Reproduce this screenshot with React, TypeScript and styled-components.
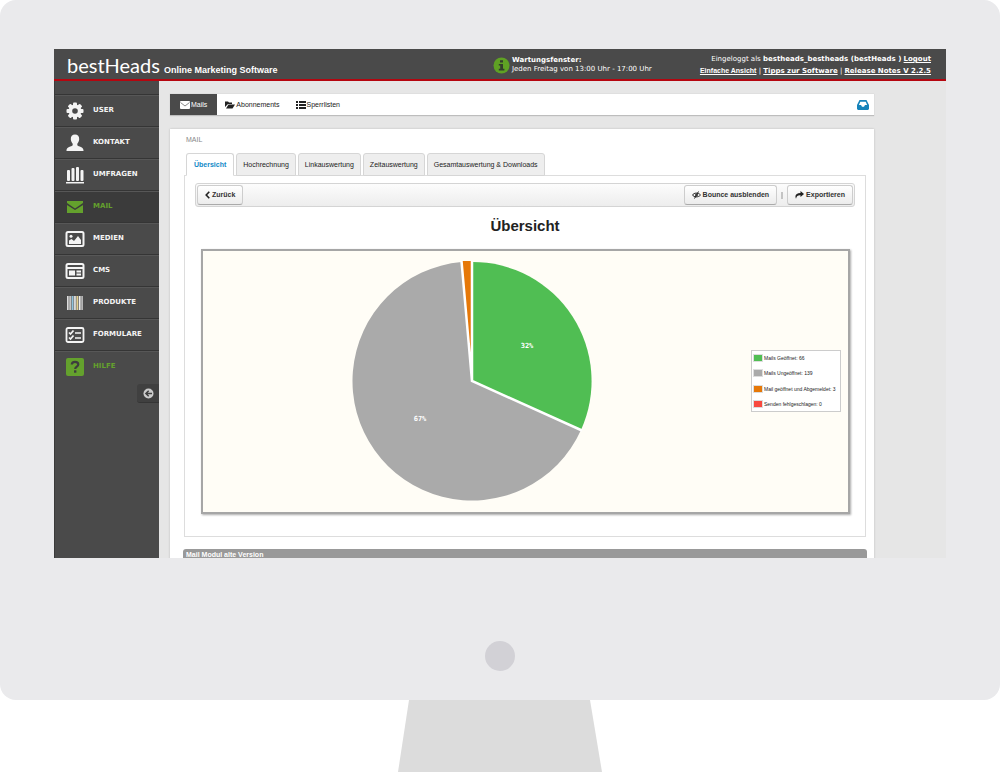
import React from "react";
import styled, { createGlobalStyle, css } from "styled-components";

const sans = `"Liberation Sans", Arial, sans-serif`;
const wide = `"DejaVu Sans", Verdana, sans-serif`;

const GlobalStyle = createGlobalStyle`
  * { box-sizing: border-box; }
  body { margin: 0; background: #fff; font-family: ${sans}; font-size: 7px; line-height: 10px; color: #222; }
  button, a { font: inherit; color: inherit; }
  h1, h2, p, ul { margin: 0; padding: 0; }
`;

const Display = styled.div`
  display: flex;
  flex-direction: column;
  align-items: center;
`;

const Bezel = styled.div`
  width: 100%;
  padding: 49px 54px 29px;
  background: #eaeaec;
  border-radius: 16px;
  display: flex;
  flex-direction: column;
  align-items: center;
  gap: 83px;
`;

const Screen = styled.div`
  width: 100%;
  aspect-ratio: 892 / 509;
  overflow: hidden;
  display: flex;
  flex-direction: column;
  background: #e6e6e6;
`;

const PowerButton = styled.button`
  width: 30px;
  height: 30px;
  border: 0;
  border-radius: 50%;
  background: #d2d1d6;
`;

const Stand = styled.div`
  width: 204px;
  height: 72px;
  background: #dcdcdc;
  clip-path: polygon(11px 0, 192px 0, 100% 100%, 0 100%);
`;

const Header = styled.header`
  display: grid;
  grid-template-columns: 1fr 438px;
  height: 32px;
  flex: none;
  padding: 0 15px 0 13px;
  background: #4a4a4a;
  border-bottom: 2px solid #b5060f;
  color: #fff;
`;

const Brand = styled.div`
  display: flex;
  align-items: baseline;
  gap: 4px;
`;

const HeaderInfo = styled.div`
  display: flex;
  justify-content: space-between;
`;

const Logo = styled.h1`
  font: 400 20px/32px Lato, sans-serif;
`;

const Slogan = styled.p`
  font-size: 9px;
  font-weight: 700;
`;

const Notice = styled.div`
  display: flex;
  align-items: center;
  gap: 2px;
  font: 7px/9px ${wide};
`;

const Account = styled.div`
  padding-top: 4px;
  text-align: right;
  font: 7px/12px ${wide};
  a { font-weight: 700; }
`;

const PlainLink = styled.a`
  font-family: ${sans};
`;

const Body = styled.div`
  flex: 1;
  min-height: 0;
  display: flex;
`;

const Sidebar = styled.nav`
  width: 105px;
  flex: none;
  padding-top: 13px;
  background: #4a4a4a;
  border-left: 1px solid #3a3a3a;
`;

const MenuItem = styled.a<{ $active?: boolean; $green?: boolean }>`
  display: flex;
  align-items: center;
  gap: 8px;
  height: 32px;
  padding: 0 0 2px 10px;
  border-top: 1px solid #353535;
  box-shadow: inset 0 1px #575757;
  background: ${(p) => (p.$active ? "#3b3b3b" : "#4a4a4a")};
  color: ${(p) => (p.$green ? "#64a12d" : "#f4f4f4")};
  font: 700 7px/10px ${wide};
  text-decoration: none;
  svg { flex: none; margin-top: 2px; }
`;

const Collapse = styled.button`
  display: flex;
  align-items: center;
  justify-content: center;
  width: 22px;
  height: 19px;
  margin: 2px 0 0 auto;
  border: 0;
  border-bottom: 1px solid #353535;
  border-radius: 3px 0 0 3px;
  background: #404040;
  padding: 0;
`;

const Main = styled.main`
  flex: 1;
  min-width: 0;
  padding: 13px 72px 0 11px;
`;

const NavBar = styled.nav`
  display: flex;
  align-items: center;
  height: 22px;
  margin-bottom: 13px;
  padding-right: 5px;
  background: #fff;
  border-bottom: 1px solid #bdbdbd;
  box-shadow: 0 0 1px #bbb;
`;

const NavLink = styled.a<{ $active?: boolean }>`
  display: flex;
  align-items: center;
  gap: 1px;
  height: 21px;
  padding: 0 8px;
  text-decoration: none;
  ${(p) => p.$active && css`padding: 0 10px; background: #4a4a4a; color: #fff;`}
`;

const InboxButton = styled.button`
  display: flex;
  margin-left: auto;
  padding: 0;
  border: 0;
  background: none;
`;

const Card = styled.section`
  padding: 6px 7px 0 14px;
  background: #fff;
  box-shadow: 0 0 2px #bbb;
`;

const CardLabel = styled.p`
  padding-left: 2px;
  margin-bottom: 8px;
  color: #888;
`;

const Tabs = styled.div`
  display: flex;
  gap: 2px;
  padding-left: 2px;
`;

const Tab = styled.button<{ $active?: boolean }>`
  height: 23px;
  margin-bottom: -1px;
  padding: 0 6px;
  border: 1px solid #d6d6d6;
  border-radius: 3px 3px 0 0;
  background: #eee;
  ${(p) => p.$active && css`
    padding: 0 7px;
    background: #fff;
    border-bottom-color: #fff;
    color: #1389c7;
    font-weight: 700;
  `}
`;

const Panel = styled.div`
  padding: 7px 10px 22px;
  border: 1px solid #ddd;
  margin-right: 1px;
`;

const Toolbar = styled.div`
  display: flex;
  align-items: center;
  gap: 3px;
  height: 24px;
  padding: 0 1px;
  border: 1px solid #d4d4d4;
  border-radius: 3px;
  background: linear-gradient(#fcfcfc, #ededed);
`;

const Divider = styled.span`
  width: 2px;
  height: 7px;
  background: #c4c4c4;
  margin: 0 1px;
`;

const ToolButton = styled.button<{ $first?: boolean }>`
  display: flex;
  align-items: center;
  gap: 2px;
  height: 20px;
  padding: 0 7px;
  border: 1px solid #cdcdcd;
  border-bottom-color: #aaa;
  border-radius: 3px;
  background: linear-gradient(#fff, #ececec);
  font-weight: 700;
  color: #333;
  ${(p) => p.$first && css`margin-right: auto;`}
`;

const ChartTitle = styled.h2`
  margin: 9px 0 13px;
  text-align: center;
  font-size: 15px;
  line-height: 20px;
`;

const Chart = styled.div`
  display: flex;
  align-items: center;
  gap: 10px;
  margin: 0 5px 0 6px;
  padding: 10px 7px 11px 0;
  border: 2px solid #a6a6a6;
  box-shadow: 1px 1px 2px #aaa;
  background: #fffdf6;
`;

const PieArea = styled.div`
  flex: 1;
  display: flex;
  justify-content: center;
`;

const Legend = styled.ul`
  display: flex;
  flex-direction: column;
  justify-content: space-between;
  width: 90px;
  height: 62px;
  padding: 3px 1px;
  border: 1px solid #ccc;
  background: #fff;
  list-style: none;
  font: 5px/8px ${sans};
  white-space: nowrap;
`;

const LegendItem = styled.li`
  display: flex;
  align-items: center;
  gap: 1px;
`;

const Swatch = styled.span<{ $color: string }>`
  width: 10px;
  height: 8px;
  border: 1px solid #ddd;
  background: ${(p) => p.$color};
`;

const VersionBar = styled.div`
  height: 22px;
  margin: 12px 0 0 -1px;
  padding: 1px 3px;
  border-radius: 3px 3px 0 0;
  background: #999;
  color: #fff;
  font-weight: 700;
`;

const SideIcon = ({ children }: { children: React.ReactNode }) => (
  <svg width="20" height="20" viewBox="0 0 20 20" fill="currentColor" aria-hidden="true">{children}</svg>
);

const icons: Record<string, React.ReactNode> = {
  USER: (
    <>
      {[0, 45, 90, 135].map((a) => (
        <rect key={a} x="8" y="1.5" width="4" height="17" rx="1" transform={`rotate(${a} 10 10)`} />
      ))}
      <circle cx="10" cy="10" r="6.4" />
      <circle cx="10" cy="10" r="2.8" fill="#4a4a4a" />
    </>
  ),
  KONTAKT: (
    <path d="M10 1.500C7.300 1.500 5.600 3.500 5.800 6.300C6 8.700 7 9.800 7.700 10.800V12.300C6.500 13.800 1.500 13.800 1.500 17.500V18H18.500V17.500C18.500 13.800 13.500 13.800 12.300 12.300V10.800C13 9.800 14 8.700 14.200 6.300C14.400 3.500 12.700 1.500 10 1.500Z" />
  ),
  UMFRAGEN: (
    <>
      <rect x="2" y="5" width="3" height="11" rx="1" />
      <rect x="6.500" y="3" width="3" height="13" rx="1" />
      <rect x="11" y="2" width="3" height="14" rx="1" />
      <rect x="15.500" y="5" width="3" height="11" rx="1" />
      <rect x="1" y="17" width="18" height="1.500" />
    </>
  ),
  MAIL: <path d="M2 4H18V6L10 11.500L2 6ZM2 8L10 13L18 8V16H2Z" />,
  MEDIEN: (
    <>
      <rect x="1.500" y="3" width="17" height="14" rx="1.500" fill="none" stroke="currentColor" strokeWidth="2" />
      <path d="M4 15V11.500L6.500 10L9 12L13 7L16 11V15Z" />
      <circle cx="6" cy="7.200" r="1.500" />
    </>
  ),
  CMS: (
    <>
      <rect x="1.500" y="3" width="17" height="14" rx="1.500" fill="none" stroke="currentColor" strokeWidth="2" />
      <rect x="2" y="6" width="16" height="2" />
      <rect x="4" y="9.500" width="6" height="5" />
      <rect x="11.500" y="9.500" width="4.500" height="2" />
      <rect x="11.500" y="12.500" width="4.500" height="2" />
    </>
  ),
  PRODUKTE: (
    <>
      <rect x="2" y="3" width="16" height="14" fill="#777" />
      {["#ddd", "#ccc", "#8fc3dd", "#eee", "#e3cf8e", "#eee", "#bbb"].map((c, i) => (
        <rect key={i} x={2 + i * 2.4} y="3" width="1.500" height="14" fill={c} />
      ))}
    </>
  ),
  FORMULARE: (
    <>
      <rect x="1.500" y="3" width="17" height="14" rx="1.500" fill="none" stroke="currentColor" strokeWidth="1.800" />
      <path d="M4 7.500L5.500 9L8.500 5.500M4 12.500L5.500 14L8.500 10.500M10 8H16M10 13H16" fill="none" stroke="currentColor" strokeWidth="1.700" />
    </>
  ),
  HILFE: (
    <>
      <rect x="1" y="1" width="18" height="18" rx="2" />
      <path d="M6.800 7.600C6.800 5.600 8.100 4.800 10 4.800C12 4.800 13.300 5.800 13.300 7.400C13.300 9.600 10.200 9.500 10.200 12" fill="none" stroke="#3d3d3d" strokeWidth="2.200" />
      <rect x="9" y="13.300" width="2.400" height="2.400" fill="#3d3d3d" />
    </>
  ),
};

const legend = [
  { color: "#50be53", label: "Mails Geöffnet: 66" },
  { color: "#aaaaaa", label: "Mails Ungeöffnet: 139" },
  { color: "#e67808", label: "Mail geöffnet und Abgemeldet: 3" },
  { color: "#f84a40", label: "Senden fehlgeschlagen: 0" },
];

const Pie = () => (
  <svg width="242" height="240" viewBox="-121 -120 242 240" role="img" aria-label="Übersicht">
    <g stroke="#fff" strokeWidth="2.500">
      <path d="M0 0L109 49A119.500 119.500 0 1 1 -10.500 -119Z" fill="#aaaaaa" stroke="none" />
      <path d="M0 0L-10.500 -120A120 120 0 0 1 0 -120Z" fill="#e67808" stroke="none" />
      <path d="M0 0V-119A119 119 0 0 1 109 49Z" fill="#50be53" stroke="none" />
      <path d="M0 -121V0L110 49.500M0 0L-10.600 -121" fill="none" />
    </g>
    <g fill="#fff" fontFamily="DejaVu Sans Mono, monospace" fontWeight="700" fontSize="7" textAnchor="middle">
      <text x="55" y="-33">32%</text>
      <text x="-52" y="40">67%</text>
    </g>
  </svg>
);

export default function App() {
  return (
    <Display>
      <GlobalStyle />
      <Bezel>
        <Screen>
          <Header>
            <Brand>
              <Logo>bestHeads</Logo>
              <Slogan>Online Marketing Software</Slogan>
            </Brand>
            <HeaderInfo>
              <Notice>
                <svg width="17" height="17" viewBox="0 0 17 17" aria-hidden="true">
                  <circle cx="8.500" cy="8.500" r="8" fill="#5fa124" />
                  <path d="M7 3.200h3v2.300H7zM5.800 7H10v4.800h1.400v1.700H5.800v-1.700h1.400V8.600H5.800z" fill="#333d2c" />
                </svg>
                <p>
                  <b>Wartungsfenster:</b>
                  <br />
                  Jeden Freitag von 13:00 Uhr - 17:00 Uhr
                </p>
              </Notice>
              <Account>
                <p>
                  Eingeloggt als <b>bestheads_bestheads (bestHeads )</b> <a href="#logout">Logout</a>
                </p>
                <p>
                  <PlainLink href="#ansicht">Einfache Ansicht</PlainLink> | <a href="#tipps">Tipps zur Software</a> |{" "}
                  <a href="#release">Release Notes V 2.2.5</a>
                </p>
              </Account>
            </HeaderInfo>
          </Header>
          <Body>
            <Sidebar>
              {Object.keys(icons).map((name) => (
                <MenuItem key={name} href={`#${name.toLowerCase()}`} $active={name === "MAIL"} $green={name === "MAIL" || name === "HILFE"}>
                  <SideIcon>{icons[name]}</SideIcon>
                  {name}
                </MenuItem>
              ))}
              <Collapse aria-label="Menü einklappen">
                <svg width="11" height="11" viewBox="0 0 11 11" aria-hidden="true">
                  <circle cx="5.500" cy="5.500" r="5" fill="#ccc" />
                  <path d="M9 5.500H3M5.700 2.700L2.900 5.500L5.700 8.300" fill="none" stroke="#404040" strokeWidth="1.500" />
                </svg>
              </Collapse>
            </Sidebar>
            <Main>
              <NavBar>
                <NavLink href="#mails" $active>
                  <svg width="10" height="8" viewBox="0 0 10 8" aria-hidden="true">
                    <rect width="10" height="8" rx="1" fill="#fff" />
                    <path d="M0.500 1.500L5 5L9.500 1.500" fill="none" stroke="#888" />
                  </svg>
                  Mails
                </NavLink>
                <NavLink href="#abonnements">
                  <svg width="10" height="8" viewBox="0 0 10 8" fill="#222" aria-hidden="true">
                    <path d="M0 0.500H3L4 1.500H7V3H3L0 6ZM3.500 3.500H10L7.500 7.500H1Z" />
                  </svg>
                  Abonnements
                </NavLink>
                <NavLink href="#sperrlisten">
                  <svg width="10" height="8" viewBox="0 0 10 8" fill="#222" aria-hidden="true">
                    <path d="M0 0H2V2H0ZM3 0H10V2H3ZM0 3H2V5H0ZM3 3H10V5H3ZM0 6H2V8H0ZM3 6H10V8H3Z" />
                  </svg>
                  Sperrlisten
                </NavLink>
                <InboxButton aria-label="Posteingang">
                  <svg width="12" height="10" viewBox="0 0 12 10" aria-hidden="true">
                    <path d="M2.500 0H9.500L12 5V9L11 10H1L0 9V5ZM3.300 1.800L1.900 5H4L5 6.800H7L8 5H10.100L8.700 1.800Z" fill="#1583ba" fillRule="evenodd" />
                  </svg>
                </InboxButton>
              </NavBar>
              <Card>
                <CardLabel>MAIL</CardLabel>
                <Tabs>
                  <Tab $active>Übersicht</Tab>
                  <Tab>Hochrechnung</Tab>
                  <Tab>Linkauswertung</Tab>
                  <Tab>Zeitauswertung</Tab>
                  <Tab>Gesamtauswertung &amp; Downloads</Tab>
                </Tabs>
                <Panel>
                  <Toolbar>
                    <ToolButton $first>
                      <svg width="5" height="8" viewBox="0 0 5 8" aria-hidden="true">
                        <path d="M4.300 0.800L1.200 4L4.300 7.200" fill="none" stroke="#222" strokeWidth="1.600" />
                      </svg>
                      Zurück
                    </ToolButton>
                    <ToolButton>
                      <svg width="9" height="8" viewBox="0 0 9 8" fill="none" stroke="#222" aria-hidden="true">
                        <path d="M0.500 4C2 1.500 6.500 1.500 8.500 4C6.500 6.500 2 6.500 0.500 4ZM2.500 7.500L6.500 0.500" />
                        <circle cx="4.500" cy="4" r="1" />
                      </svg>
                      Bounce ausblenden
                    </ToolButton>
                    <Divider />
                    <ToolButton>
                      <svg width="9" height="8" viewBox="0 0 9 8" fill="#222" aria-hidden="true">
                        <path d="M5.500 0L9 3L5.500 6V4.200C3 4 1.500 5 1 7.800C-0.800 4 1.800 1.800 5.500 1.900Z" />
                      </svg>
                      Exportieren
                    </ToolButton>
                  </Toolbar>
                  <ChartTitle>Übersicht</ChartTitle>
                  <Chart>
                    <PieArea>
                      <Pie />
                    </PieArea>
                    <Legend>
                      {legend.map((entry) => (
                        <LegendItem key={entry.label}>
                          <Swatch $color={entry.color} />
                          {entry.label}
                        </LegendItem>
                      ))}
                    </Legend>
                  </Chart>
                </Panel>
                <VersionBar>Mail Modul alte Version</VersionBar>
              </Card>
            </Main>
          </Body>
        </Screen>
        <PowerButton aria-label="Ein/Aus" />
      </Bezel>
      <Stand />
    </Display>
  );
}
